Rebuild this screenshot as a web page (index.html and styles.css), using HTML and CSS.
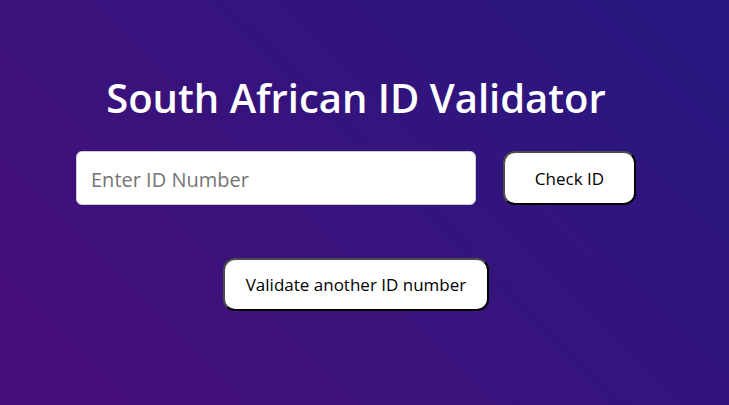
FILE: index.html
```html
<!DOCTYPE html>
<html lang="en">
<head>
  <meta charset="utf-8">
  <meta name="viewport" content="width=device-width, initial-scale=1">
  <title>South African ID Validator</title>
  <link rel="stylesheet" href="styles.css">
</head>
<body>
  <main class="validator">
    <h1 class="title">South African ID Validator</h1>
    <form class="id-form">
      <input class="id-input" type="text" inputmode="numeric" aria-label="ID number" placeholder="Enter ID Number">
      <button class="button button-check" type="submit">Check ID</button>
    </form>
    <button class="button button-reset" type="button">Validate another ID number</button>
  </main>
</body>
</html>
```
FILE: styles.css
```css
* {
  box-sizing: border-box;
}

body {
  margin: 0;
  min-height: 100vh;
  font-family: "Segoe UI", "Open Sans", "Noto Sans", sans-serif;
  background: linear-gradient(45deg, #480e7a, #26187f);
}

.validator {
  display: flex;
  flex-direction: column;
  align-items: center;
  padding: 68px 93px 24px 76px;
}

.title {
  margin: 0 0 23px;
  color: #fff;
  font-size: 40px;
  font-weight: 600;
  line-height: 60px;
  text-align: center;
}

.id-form {
  display: flex;
  gap: 27px;
  width: 100%;
  max-width: 560px;
  margin-bottom: 53px;
}

.id-input {
  flex: 1;
  min-width: 0;
  height: 54px;
  padding: 2px 14px 0;
  border: 1px solid #ccc;
  border-radius: 6px;
  background: #fff;
  color: #000;
  font-family: inherit;
  font-size: 20px;
}

.id-input::placeholder {
  color: #757575;
  opacity: 1;
}

.button {
  height: 54px;
  padding: 0 20px;
  border: 2px solid;
  border-color: #4c4c4c #000 #000 #4c4c4c;
  border-radius: 12px;
  background: #fff;
  color: #000;
  font-family: inherit;
  font-size: 17px;
}

.button-check {
  width: 133px;
}

.button-reset {
  min-width: 266px;
  height: 53px;
}
```
